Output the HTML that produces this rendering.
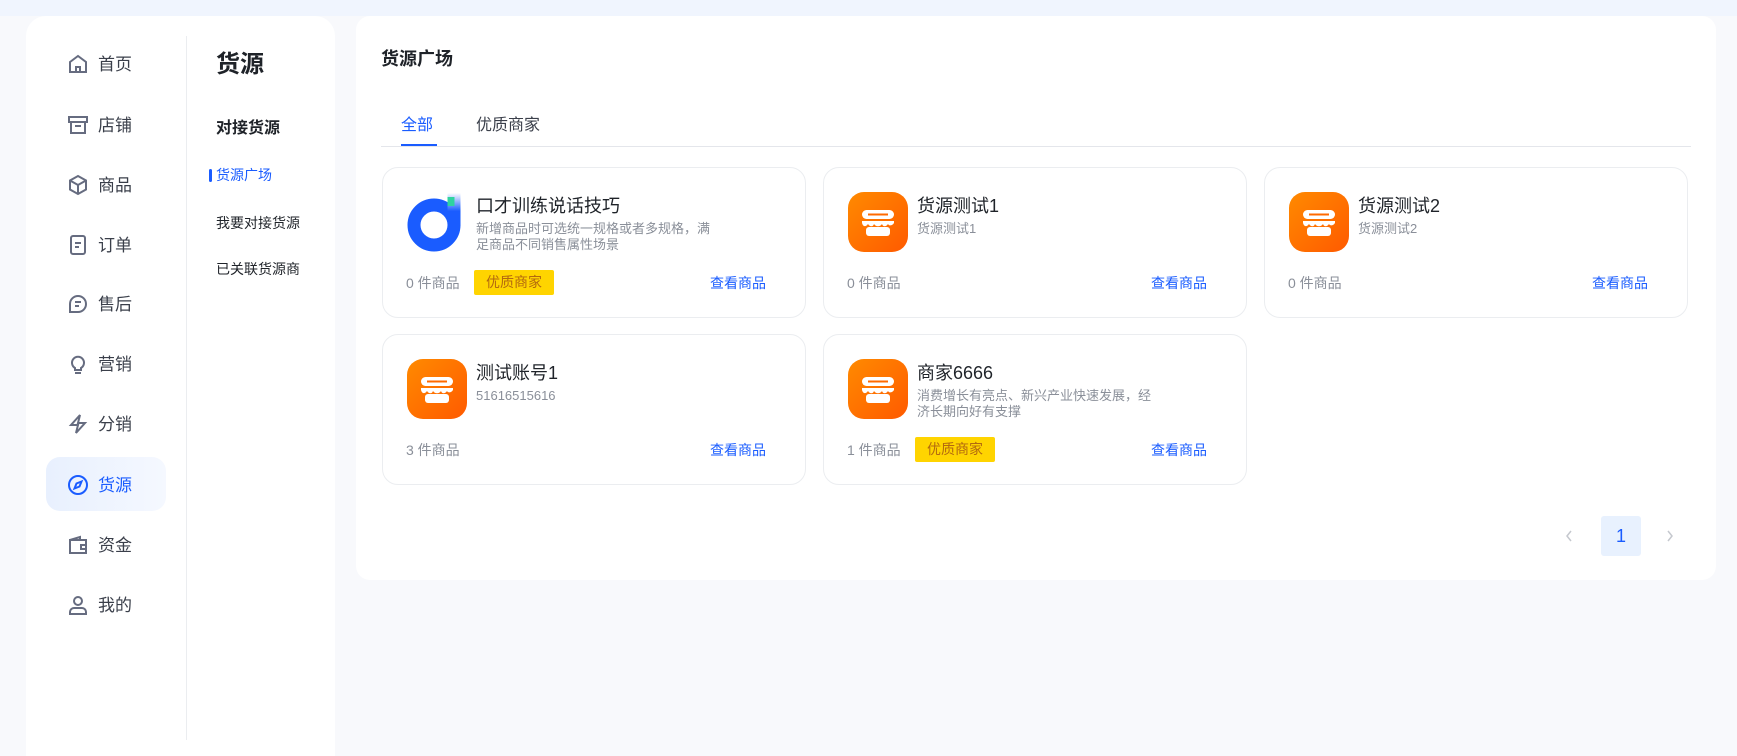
<!DOCTYPE html><html><head><meta charset="utf-8"><style>
*{margin:0;padding:0;box-sizing:border-box}
body{width:1737px;height:740px;background:#f8f9fc;font-family:"Liberation Sans","Noto Sans CJK SC",sans-serif;position:relative;overflow:hidden;color:#1f2329}
.top{position:absolute;left:0;top:0;width:1737px;height:16px;background:#f0f5fe}
.side{position:absolute;left:26px;top:16px;width:309px;height:740px;background:#fff;border-radius:20px 20px 0 0}
.div{position:absolute;left:186px;top:36px;width:1px;height:704px;background:#ebedf0}
.nav{position:absolute;left:46px;width:120px;height:54px;border-radius:14px;font-size:17px;color:#3a3f4a}
.nav svg{position:absolute;left:21px;top:17px}
.nav span{position:absolute;left:52px;top:14px}
.nav.act{background:linear-gradient(90deg,#e8f0fe,#f5f8ff);color:#1a5cff}
.s2{position:absolute;font-size:14px;color:#1f2329}
.main{position:absolute;left:356px;top:16px;width:1360px;height:564px;background:#fff;border-radius:14px}
.card{position:absolute;width:424px;height:151px;border:1px solid #ebedf0;border-radius:16px;background:#fff}
.card .lg{position:absolute;left:24px;top:24px;width:60px;height:60px}
.card .t{position:absolute;left:93px;top:24px;font-size:18px;color:#1f2329}
.card .d{position:absolute;left:93px;top:53px;font-size:13px;line-height:16px;color:#8a8f99;width:240px}
.card .n{position:absolute;left:23px;top:105px;font-size:14px;color:#8a8f99}
.card .tag{position:absolute;left:91px;top:102px;width:80px;height:25px;background:#ffd400;border-radius:2px;color:#b3690f;font-size:14px;text-align:center;line-height:25px}
.card .v{position:absolute;left:327px;top:105px;font-size:14px;color:#1a5cff}
</style></head><body>
<div class="top"></div>
<div class="side"></div>
<div class="div"></div>
<svg width="0" height="0" style="position:absolute"><defs>
<linearGradient id="og" x1="0" y1="0" x2="1" y2="1"><stop offset="0" stop-color="#ff8a00"/><stop offset="1" stop-color="#ff5a00"/></linearGradient>
<symbol id="shop" viewBox="0 0 60 60"><rect width="60" height="60" rx="16" fill="url(#og)"/><rect x="14" y="18" width="32" height="9" rx="4.5" fill="#fff"/><rect x="20" y="21.5" width="20" height="2" fill="#ff6a00"/><path d="M14 29h32v2c-2 3-5 3-6 1-2 3-5 3-6 0-2 3-6 3-8 0-1 3-4 3-6 0-2 3-5 3-6-1z" fill="#fff"/><rect x="18" y="35" width="24" height="9" rx="3" fill="#fff"/></symbol>
</defs></svg>
<div class="nav" style="top:36px"><svg width="22" height="22" viewBox="0 0 22 22" fill="none" stroke="#666c80" stroke-width="2"><path d="M3 9l8-6 8 6v10H3z"/><path d="M9 19v-5h4v5"/></svg><span>首页</span></div>
<div class="nav" style="top:97px"><svg width="22" height="22" viewBox="0 0 22 22" fill="none" stroke="#666c80" stroke-width="2"><rect x="2" y="3" width="18" height="5"/><path d="M4 8v11h14V8M8 12h6"/></svg><span>店铺</span></div>
<div class="nav" style="top:157px"><svg width="22" height="22" viewBox="0 0 22 22" fill="none" stroke="#666c80" stroke-width="2"><path d="M11 2l8 4.5v9L11 20l-8-4.5v-9zM3 6.5l8 4.5 8-4.5M11 11v9"/></svg><span>商品</span></div>
<div class="nav" style="top:217px"><svg width="22" height="22" viewBox="0 0 22 22" fill="none" stroke="#666c80" stroke-width="2"><rect x="4" y="2" width="14" height="18" rx="2"/><path d="M8 9h6M8 13h4"/></svg><span>订单</span></div>
<div class="nav" style="top:276px"><svg width="22" height="22" viewBox="0 0 22 22" fill="none" stroke="#666c80" stroke-width="2"><path d="M11 3a8 8 0 1 1 0 16H3v-8a8 8 0 0 1 8-8zM8 9h6M8 13h4"/></svg><span>售后</span></div>
<div class="nav" style="top:336px"><svg width="22" height="22" viewBox="0 0 22 22" fill="none" stroke="#666c80" stroke-width="2"><path d="M8 15a6 6 0 1 1 6 0v2H8zM8 20h6"/></svg><span>营销</span></div>
<div class="nav" style="top:396px"><svg width="22" height="22" viewBox="0 0 22 22" fill="none" stroke="#666c80" stroke-width="2"><path d="M13 2L4 12h7l-2 8 9-10h-7z"/></svg><span>分销</span></div>
<div class="nav act" style="top:457px"><svg width="22" height="22" viewBox="0 0 22 22" fill="none" stroke="#1a5cff" stroke-width="2"><circle cx="11" cy="11" r="9"/><path d="M14.5 7.5L12.5 12.5 7.5 14.5 9.5 9.5z"/></svg><span>货源</span></div>
<div class="nav" style="top:517px"><svg width="22" height="22" viewBox="0 0 22 22" fill="none" stroke="#666c80" stroke-width="2"><path d="M3 6h16v13H3zM3 6l10-3v3M14 11h5v4h-5z"/></svg><span>资金</span></div>
<div class="nav" style="top:577px"><svg width="22" height="22" viewBox="0 0 22 22" fill="none" stroke="#666c80" stroke-width="2"><circle cx="11" cy="7" r="4"/><path d="M3 20v-2a4 4 0 0 1 4-4h8a4 4 0 0 1 4 4v2z"/></svg><span>我的</span></div>
<div class="s2" style="left:216px;top:44px;font-size:24px;font-weight:bold">货源</div>
<div class="s2" style="left:216px;top:114px;font-size:16px;font-weight:bold">对接货源</div>
<div style="position:absolute;left:209px;top:169px;width:3px;height:13px;background:#1a5cff;border-radius:2px"></div>
<div class="s2" style="left:216px;top:165px;color:#1a5cff">货源广场</div>
<div class="s2" style="left:216px;top:213px">我要对接货源</div>
<div class="s2" style="left:216px;top:259px">已关联货源商</div>
<div class="main"></div>
<div style="position:absolute;left:381px;top:45px;font-size:18px;font-weight:bold">货源广场</div>
<div style="position:absolute;left:401px;top:111px;font-size:16px;color:#1a5cff">全部</div>
<div style="position:absolute;left:476px;top:111px;font-size:16px;color:#3a3f4a">优质商家</div>
<div style="position:absolute;left:381px;top:146px;width:1310px;height:1px;background:#e4e6eb"></div>
<div style="position:absolute;left:401px;top:144px;width:36px;height:2px;background:#1a5cff"></div>
<div class="card" style="left:382px;top:167px">
<svg class="lg" viewBox="0 0 60 60" style="left:24px;top:24px"><defs><linearGradient id="bg2" x1="0" y1="0" x2="0" y2="1"><stop offset="0" stop-color="#fff"/><stop offset=".55" stop-color="#1a5cff"/></linearGradient></defs><circle cx="27" cy="33" r="20" fill="none" stroke="#1a5cff" stroke-width="13"/><rect x="40.5" y="1" width="13" height="33" fill="url(#bg2)"/><rect x="40.5" y="5" width="7" height="9" fill="#2fd3a0"/></svg>
<div class="t">口才训练说话技巧</div><div class="d">新增商品时可选统一规格或者多规格，满足商品不同销售属性场景</div>
<div class="n">0 件商品</div><div class="tag">优质商家</div><div class="v">查看商品</div></div>
<div class="card" style="left:823px;top:167px"><svg class="lg"><use href="#shop"/></svg><div class="t">货源测试1</div><div class="d">货源测试1</div><div class="n">0 件商品</div><div class="v">查看商品</div></div>
<div class="card" style="left:1264px;top:167px"><svg class="lg"><use href="#shop"/></svg><div class="t">货源测试2</div><div class="d">货源测试2</div><div class="n">0 件商品</div><div class="v">查看商品</div></div>
<div class="card" style="left:382px;top:334px"><svg class="lg"><use href="#shop"/></svg><div class="t">测试账号1</div><div class="d">51616515616</div><div class="n">3 件商品</div><div class="v">查看商品</div></div>
<div class="card" style="left:823px;top:334px"><svg class="lg"><use href="#shop"/></svg><div class="t">商家6666</div><div class="d">消费增长有亮点、新兴产业快速发展，经济长期向好有支撑</div><div class="n">1 件商品</div><div class="tag">优质商家</div><div class="v">查看商品</div></div>
<svg style="position:absolute;left:1564px;top:529px" width="10" height="14" viewBox="0 0 10 14" fill="none" stroke="#c5c8ce" stroke-width="1.5"><path d="M7 2L3 7l4 5"/></svg>
<div style="position:absolute;left:1601px;top:516px;width:40px;height:40px;background:#e8f1fe;border-radius:3px;color:#1a5cff;font-size:18px;text-align:center;line-height:40px">1</div>
<svg style="position:absolute;left:1665px;top:529px" width="10" height="14" viewBox="0 0 10 14" fill="none" stroke="#c5c8ce" stroke-width="1.5"><path d="M3 2l4 5-4 5"/></svg>
</body></html>
